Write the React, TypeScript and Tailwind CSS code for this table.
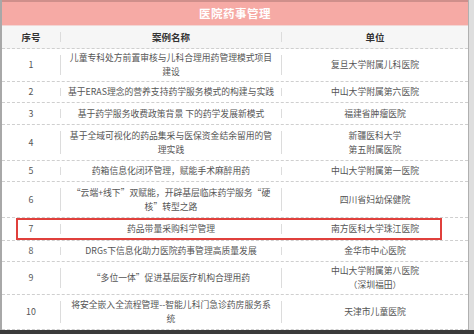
import React from "react";

type Row = { n: string; name: React.ReactNode; unit: React.ReactNode; h: string; hl?: boolean };

const rows: Row[] = [
  { n: "1", name: <>儿童专科处方前置审核与儿科合理用药管理模式项目<br />建设</>, unit: "复旦大学附属儿科医院", h: "h-[33px]" },
  { n: "2", name: "基于ERAS理念的营养支持药学服务模式的构建与实践", unit: "中山大学附属第六医院", h: "h-[21px]" },
  { n: "3", name: "基于药学服务收费政策背景 下的药学发展新模式", unit: "福建省肿瘤医院", h: "h-[22px]" },
  { n: "4", name: <>基于全域可视化的药品集采与医保资金结余留用的管<br />理实践</>, unit: <>新疆医科大学<br />第五附属医院</>, h: "h-[36px]" },
  { n: "5", name: "药箱信息化闭环管理，赋能手术麻醉用药", unit: "中山大学附属第一医院", h: "h-[21px]" },
  { n: "6", name: <>“云端+线下”双赋能，开辟基层临床药学服务“硬<br />核”转型之路</>, unit: "四川省妇幼保健院", h: "h-[36px]" },
  { n: "7", name: "药品带量采购科学管理", unit: "南方医科大学珠江医院", h: "h-[23px]", hl: true },
  { n: "8", name: "DRGs下信息化助力医院药事管理高质量发展", unit: "金华市中心医院", h: "h-[21px]" },
  { n: "9", name: "“多位一体”促进基层医疗机构合理用药", unit: <>中山大学附属第八医院<br />（深圳福田）</>, h: "h-[33px]" },
  { n: "10", name: <>将安全嵌入全流程管理--智能儿科门急诊药房服务系<br />统</>, unit: "天津市儿童医院", h: "h-[35px]" },
];

function Sep() {
  return <div className="w-px self-stretch my-[6px] bg-[#dcdcdc]" />;
}

export default function App() {
  return (
    <div
      className="w-[474px] h-[334px] overflow-hidden bg-white flex flex-col"
      style={{ fontFamily: '"Noto Sans CJK SC", "Noto Sans", sans-serif' }}
    >
      <div className="flex-1 flex flex-col border-l-2 border-[#a8a8a8] border-r-[5px] border-r-[#dedede] min-h-0">
        <div className="border-r border-[#b0b0b0] flex flex-col flex-1 min-h-0">
          <div className="h-[26px] shrink-0 bg-[#f6aaa5] border-t-2 border-[#cf8f8b] border-b border-b-[#f3d6d4] flex items-center justify-center">
            <span className="text-white font-bold text-[11.5px] tracking-[0.5px]">医院药事管理</span>
          </div>
          <div className="h-[23px] shrink-0 bg-[#f6f6f6] flex items-stretch border-b border-dashed border-[#cfcfcf] text-[9.5px] font-bold text-[#333]">
            <div className="w-[58px] flex items-center justify-center">序号</div>
            <Sep />
            <div className="w-[220px] flex items-center justify-center">案例名称</div>
            <Sep />
            <div className="flex-1 flex items-center justify-center">单位</div>
          </div>
          {rows.map((r) => (
            <div
              key={r.n}
              className={`${r.h} shrink-0 relative flex items-stretch border-b border-dashed border-[#cfcfcf] text-[8.8px] leading-[14px] text-[#555]`}
            >
              <div className="w-[58px] flex items-center justify-center">{r.n}</div>
              <Sep />
              <div className="w-[220px] flex items-center justify-center text-center whitespace-nowrap">{r.name}</div>
              <Sep />
              <div className="flex-1 flex items-center justify-center text-center whitespace-nowrap">{r.unit}</div>
              {r.hl && (
                <div className="absolute left-[14px] top-0 bottom-0 w-[426px] border-2 border-[#e0403c]" />
              )}
            </div>
          ))}
          <div className="flex-1" />
        </div>
      </div>
      <div className="h-[4px] shrink-0 bg-[#3a3a3a]" />
    </div>
  );
}
